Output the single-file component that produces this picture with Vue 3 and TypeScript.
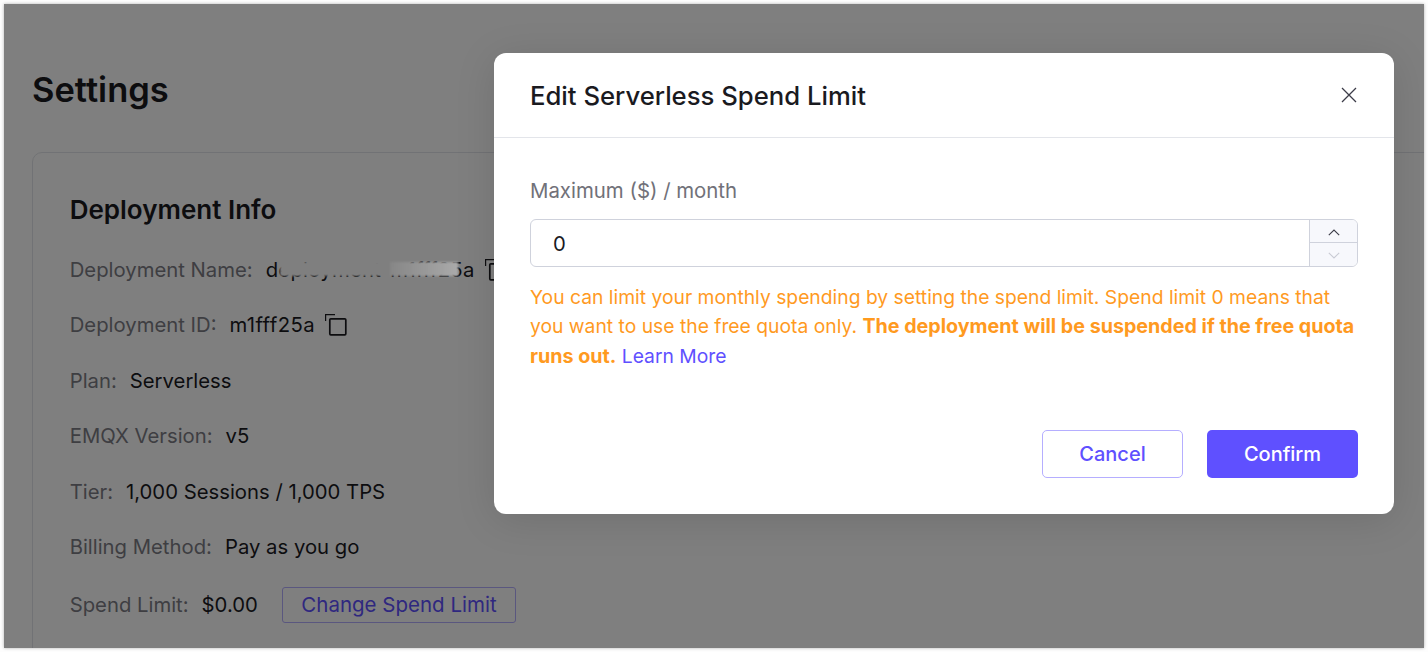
<template>
  <div class="frame">
    <div class="page">
      <h1 class="titulo">Settings</h1>

      <section class="card">
        <h2 class="card-titulo">Deployment Info</h2>

        <div class="linha">
          <span class="rotulo">Deployment Name:</span>
          <span class="nome">
            deployment-m1fff25a
            <i class="borrao"></i>
            <i class="borrao claro"></i>
          </span>
          <svg class="copiar" viewBox="0 0 22 22" fill="none" stroke="currentColor" stroke-width="1.2">
            <path d="M.6 7V.6H10" />
            <rect x="4.8" y="4.8" width="16" height="16" rx="1" stroke-width="1.7" />
          </svg>
        </div>

        <div class="linha">
          <span class="rotulo">Deployment ID:</span>
          <span class="valor espacado">m1fff25a</span>
          <svg class="copiar" viewBox="0 0 22 22" fill="none" stroke="currentColor" stroke-width="1.2">
            <path d="M.6 7V.6H10" />
            <rect x="4.8" y="4.8" width="16" height="16" rx="1" stroke-width="1.7" />
          </svg>
        </div>

        <div v-for="item in info" :key="item.rotulo" class="linha">
          <span class="rotulo">{{ item.rotulo }}:</span>
          <span class="valor">{{ item.valor }}</span>
        </div>

        <div class="linha linha-limite">
          <span class="rotulo">Spend Limit:</span>
          <span class="valor">$0.00</span>
          <button class="mudar">Change Spend Limit</button>
        </div>
      </section>

      <div class="overlay">
        <div class="modal">
          <header class="modal-top">
            <span class="modal-titulo">Edit Serverless Spend Limit</span>
            <svg class="fechar" viewBox="0 0 16 16" fill="none" stroke="currentColor" stroke-width="1.3">
              <path d="M1 1l14 14M15 1L1 15" />
            </svg>
          </header>

          <div class="modal-corpo">
            <label class="campo-rotulo">Maximum ($) / month</label>
            <div class="campo">
              <span class="campo-valor">0</span>
              <div class="setas">
                <span class="seta">
                  <svg viewBox="0 0 12 7" fill="none" stroke="currentColor" stroke-width="1.1">
                    <path d="M.8 6.2L6 1l5.2 5.2" />
                  </svg>
                </span>
                <span class="seta desativada">
                  <svg viewBox="0 0 12 7" fill="none" stroke="currentColor" stroke-width="1.1">
                    <path d="M.8.8L6 6l5.2-5.2" />
                  </svg>
                </span>
              </div>
            </div>
            <p class="aviso">
              You can limit your monthly spending by setting the spend limit. Spend limit 0 means that
              you want to use the free quota only.
              <strong>The deployment will be suspended if the free quota runs out.</strong>&nbsp;<a class="saiba">Learn More</a>
            </p>
          </div>

          <footer class="modal-acoes">
            <button class="cancelar">Cancel</button>
            <button class="confirmar">Confirm</button>
          </footer>
        </div>
      </div>
    </div>
  </div>
</template>

<script setup lang="ts">
interface Info {
  rotulo: string
  valor: string
}

const info: Info[] = [
  { rotulo: "Plan", valor: "Serverless" },
  { rotulo: "EMQX Version", valor: "v5" },
  { rotulo: "Tier", valor: "1,000 Sessions / 1,000 TPS" },
  { rotulo: "Billing Method", valor: "Pay as you go" },
]
</script>

<style>
html,
body {
  margin: 0;
  background: #fdfdfd;
  overflow: hidden;
}
</style>

<style scoped>
.frame {
  box-sizing: border-box;
  width: 1428px;
  height: 652px;
  padding: 4px;
  font-family: Inter, "Liberation Sans", sans-serif;
}

.page {
  position: relative;
  box-sizing: border-box;
  width: 1420px;
  height: 644px;
  padding: 64px 0 0 28px;
  overflow: hidden;
  background: #fff;
  box-shadow: 0 0 3px rgba(0, 0, 0, 0.3);
}

.titulo {
  margin: 0 0 40px;
  font-size: 34.5px;
  line-height: 44px;
  font-weight: 600;
  color: #1a1a1f;
}

.card {
  box-sizing: border-box;
  width: 1500px;
  height: 560px;
  padding: 40px 36px 40px 36.7px;
  border: 1px solid #e3e5ea;
  border-radius: 10px;
}

.card-titulo {
  margin: 0 0 30.5px;
  font-size: 26px;
  line-height: 34px;
  font-weight: 600;
  color: #1a1a1f;
}

.linha {
  display: flex;
  align-items: center;
  height: 24px;
  margin-bottom: 31.4px;
  font-size: 20.3px;
  white-space: nowrap;
}

.rotulo {
  margin-right: 13px;
  color: #7d7d85;
}

.valor,
.nome {
  color: #1a1a1f;
}

.espacado {
  letter-spacing: 0.4px;
}

.nome {
  position: relative;
  letter-spacing: 0.25px;
}

.borrao {
  position: absolute;
  left: 14px;
  top: 5px;
  width: 178px;
  height: 14px;
  background: #fff;
  filter: blur(1px);
}

.borrao.claro {
  left: 124px;
  width: 68px;
  z-index: 1;
  background: linear-gradient(90deg, rgba(255, 255, 255, 0.06), rgba(255, 255, 255, 0.34));
}

.copiar {
  width: 22px;
  height: 22px;
  margin-left: 10px;
  color: #1a1a1f;
}

.linha-limite {
  margin-top: 34.5px;
}

.mudar {
  box-sizing: border-box;
  height: 36px;
  margin-left: 24px;
  padding: 0 18.5px;
  border: 1px solid #b5aeff;
  border-radius: 3px;
  background: #fff;
  color: #5f50ff;
  font: 20.5px Inter, "Liberation Sans", sans-serif;
}

.overlay {
  position: absolute;
  inset: 0;
  padding: 49px 0 0 490px;
  background: rgba(0, 0, 0, 0.5);
}

.modal {
  box-sizing: border-box;
  width: 900px;
  height: 461px;
  border-radius: 12px;
  background: #fff;
  box-shadow: 0 6px 40px rgba(0, 0, 0, 0.12);
}

.modal-top {
  display: flex;
  align-items: center;
  justify-content: space-between;
  box-sizing: border-box;
  height: 85px;
  padding: 0 37px 0 36px;
  border-bottom: 1px solid #e3e5ea;
}

.modal-titulo {
  font-size: 25.7px;
  font-weight: 500;
  color: #1a1a1f;
}

.fechar {
  width: 16px;
  height: 16px;
  color: #3c3c48;
}

.modal-corpo {
  padding: 40px 36px 0;
}

.campo-rotulo {
  display: block;
  margin-bottom: 15px;
  font-size: 20.4px;
  line-height: 26px;
  color: #717179;
}

.campo {
  display: flex;
  justify-content: space-between;
  box-sizing: border-box;
  height: 48px;
  border: 1px solid #cfd2dc;
  border-radius: 6px;
}

.campo-valor {
  padding-left: 22px;
  font-size: 20.3px;
  line-height: 48px;
  color: #1a1a1f;
}

.setas {
  display: flex;
  flex-direction: column;
  width: 47px;
  border-left: 1px solid #cfd2dc;
}

.seta {
  flex: 1;
  display: flex;
  align-items: center;
  justify-content: center;
  padding-top: 2px;
  background: #f7f8fc;
  color: #3c3c48;
}

.seta:first-child {
  flex: none;
  height: 20px;
  border-bottom: 1px solid #cfd2dc;
  border-top-right-radius: 5px;
}

.seta:last-child {
  border-bottom-right-radius: 5px;
}

.seta svg {
  width: 12px;
  height: 7px;
}

.seta.desativada {
  color: #c9cbd4;
}

.aviso {
  margin: 16px 0 0;
  font-size: 19.3px;
  line-height: 29.4px;
  color: #ff9a1f;
}

.aviso strong {
  font-size: 19.7px;
  font-weight: 700;
}

.saiba {
  color: #5f50ff;
}

.modal-acoes {
  display: flex;
  justify-content: flex-end;
  gap: 24px;
  padding: 59px 36px 0;
}

.cancelar,
.confirmar {
  box-sizing: border-box;
  height: 48px;
  border-radius: 5px;
  font: 500 20px Inter, "Liberation Sans", sans-serif;
}

.cancelar {
  width: 141px;
  border: 1px solid #b5aeff;
  background: #fff;
  color: #5f50ff;
}

.confirmar {
  width: 151px;
  border: none;
  background: #5f50ff;
  color: #fff;
}
</style>
